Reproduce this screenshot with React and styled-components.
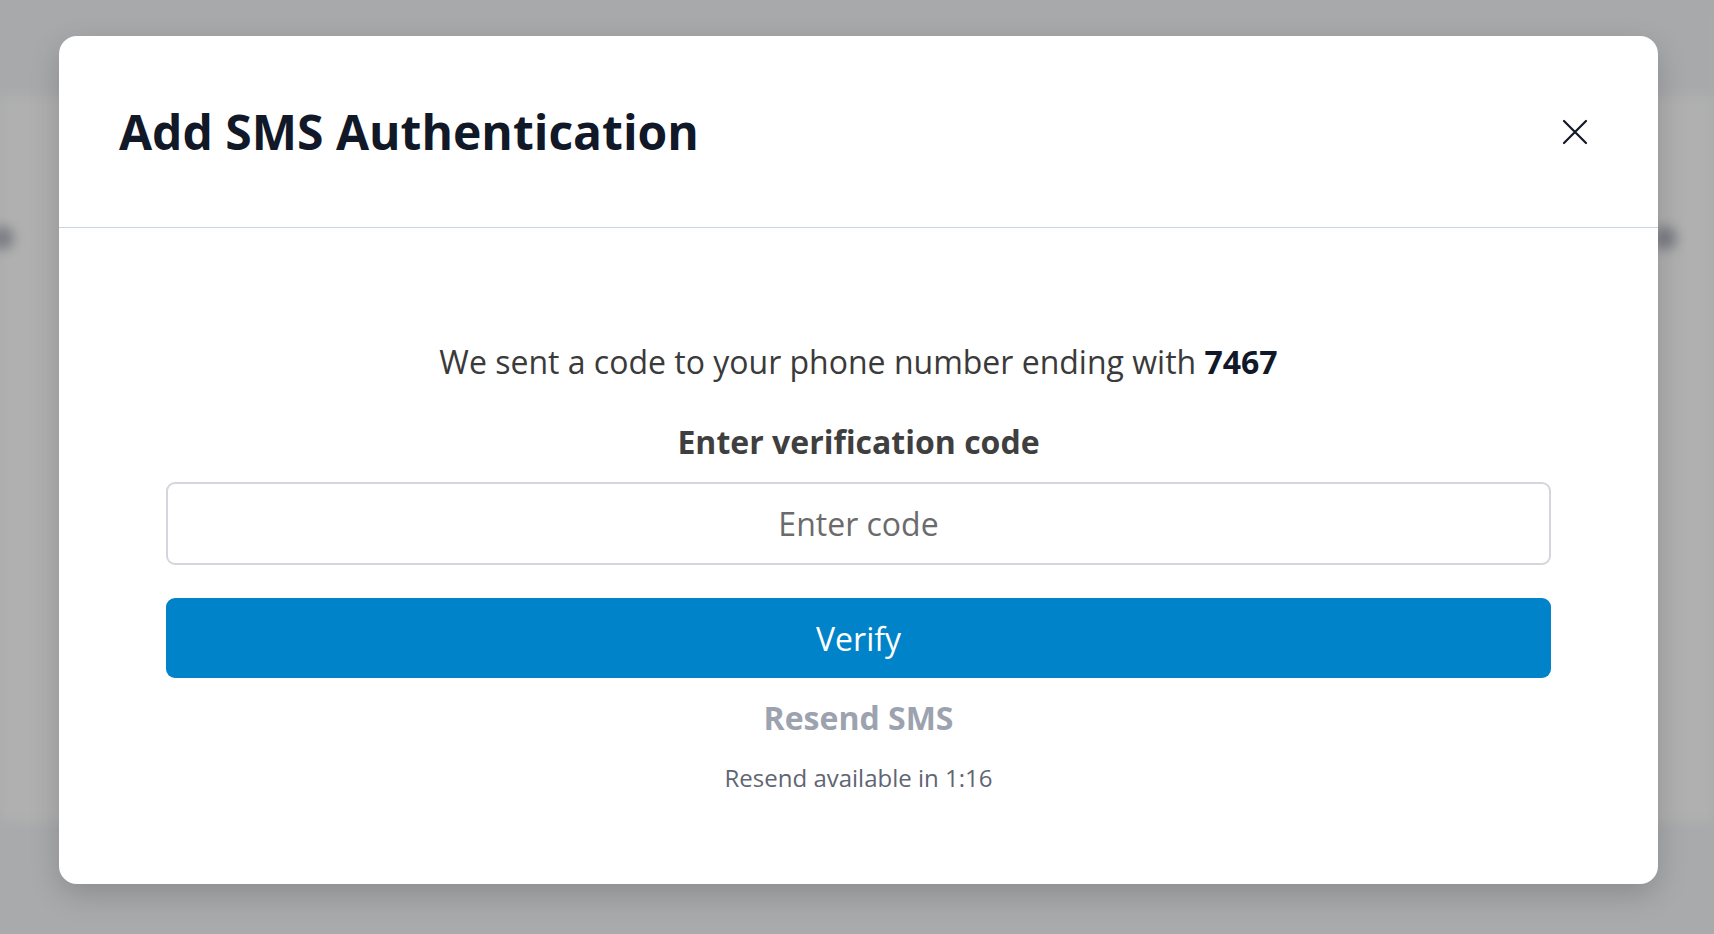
import React from 'react';
import styled, { createGlobalStyle } from 'styled-components';

const GlobalStyle = createGlobalStyle`
    html, body {
        margin: 0;
        padding: 0;
        height: 100%;
    }

    body {
        font-family: "Open Sans", "Noto Sans", sans-serif;
        background: #a9aaac;
        overflow: hidden;
    }
`;

const Backdrop = styled.div`
    position: relative;
    width: 1714px;
    height: 934px;
    overflow: hidden;
    background: #a9aaac;
`;

/* the blurred page behind the dialog */
const PageBehind = styled.div`
    position: absolute;
    inset: 0;
    display: flex;
    flex-direction: column;
    filter: blur(6px);
`;

const PageTop = styled.div`
    height: 96px;
    background: #a8a9ab;
`;

const PagePanel = styled.div`
    height: 596px;
    background: #b0b0b0;
    display: flex;
    justify-content: space-between;
    align-items: flex-start;
    padding: 130px 37px 0 0;
`;

const PageDot = styled.span`
    width: 24px;
    height: 24px;
    border-radius: 50%;
    background: #7c7e84;
    margin-left: ${(p) => (p.$edge ? '-10px' : '0')};
`;

const Dialog = styled.section`
    position: absolute;
    left: 59px;
    top: 36px;
    width: 1599px;
    height: 848px;
    background: #ffffff;
    border-radius: 18px;
    box-shadow: 0 10px 30px rgba(0, 0, 0, 0.18);
    display: flex;
    flex-direction: column;
`;

const Header = styled.header`
    height: 191px;
    flex: none;
    display: flex;
    align-items: center;
    justify-content: space-between;
    padding: 0 60px;
    border-bottom: 1px solid #cbd5e1;
`;

const Title = styled.h1`
    margin: 0;
    font-size: 48px;
    line-height: 60px;
    font-weight: 700;
    color: #111827;
`;

const CloseButton = styled.button`
    width: 40px;
    height: 40px;
    margin-right: 3px;
    padding: 0;
    border: 0;
    background: none;
    color: #111827;
    display: flex;
    align-items: center;
    justify-content: center;
    cursor: pointer;
`;

const Body = styled.div`
    padding: 0 107px;
    display: flex;
    flex-direction: column;
    align-items: center;
`;

const Message = styled.p`
    margin: 114px 0 0;
    font-size: 32px;
    line-height: 40px;
    color: #3a3a3a;
`;

const Strong = styled.strong`
    color: #111827;
    font-weight: 700;
`;

const Label = styled.label`
    margin-top: 40px;
    font-size: 32px;
    line-height: 40px;
    font-weight: 700;
    color: #3f3f3f;
`;

const CodeInput = styled.input`
    box-sizing: border-box;
    margin-top: 20px;
    width: 100%;
    height: 83px;
    border: 2px solid #d4d6db;
    border-radius: 9px;
    font-family: inherit;
    font-size: 32px;
    text-align: center;
    color: #111827;
    outline: none;

    &::placeholder {
        color: #6b6b6b;
    }
`;

const VerifyButton = styled.button`
    margin-top: 33px;
    width: 100%;
    height: 80px;
    border: 0;
    border-radius: 9px;
    background: #0083c8;
    color: #ffffff;
    font-family: inherit;
    font-size: 32px;
    cursor: pointer;
`;

const ResendLink = styled.button`
    margin-top: 20px;
    padding: 0;
    border: 0;
    background: none;
    font-family: inherit;
    font-size: 32px;
    line-height: 40px;
    font-weight: 700;
    color: #9ca3af;
    cursor: default;
`;

const ResendNote = styled.p`
    margin: 25px 0 0;
    font-size: 24px;
    line-height: 30px;
    color: #5f6673;
`;

const CloseIcon = () => (
    <svg width="26" height="26" viewBox="0 0 26 26" fill="none" stroke="currentColor" strokeWidth="2.2" strokeLinecap="round">
        <path d="M2 2 L24 24 M24 2 L2 24" />
    </svg>
);

export default function App() {
    return (
        <Backdrop>
            <GlobalStyle />
            <PageBehind>
                <PageTop />
                <PagePanel>
                    <PageDot $edge />
                    <PageDot />
                </PagePanel>
            </PageBehind>
            <Dialog role="dialog" aria-labelledby="sms-title">
                <Header>
                    <Title id="sms-title">Add SMS Authentication</Title>
                    <CloseButton aria-label="Close"><CloseIcon /></CloseButton>
                </Header>
                <Body>
                    <Message>We sent a code to your phone number ending with <Strong>7467</Strong></Message>
                    <Label htmlFor="sms-code">Enter verification code</Label>
                    <CodeInput id="sms-code" placeholder="Enter code" />
                    <VerifyButton>Verify</VerifyButton>
                    <ResendLink disabled>Resend SMS</ResendLink>
                    <ResendNote>Resend available in 1:16</ResendNote>
                </Body>
            </Dialog>
        </Backdrop>
    );
}
